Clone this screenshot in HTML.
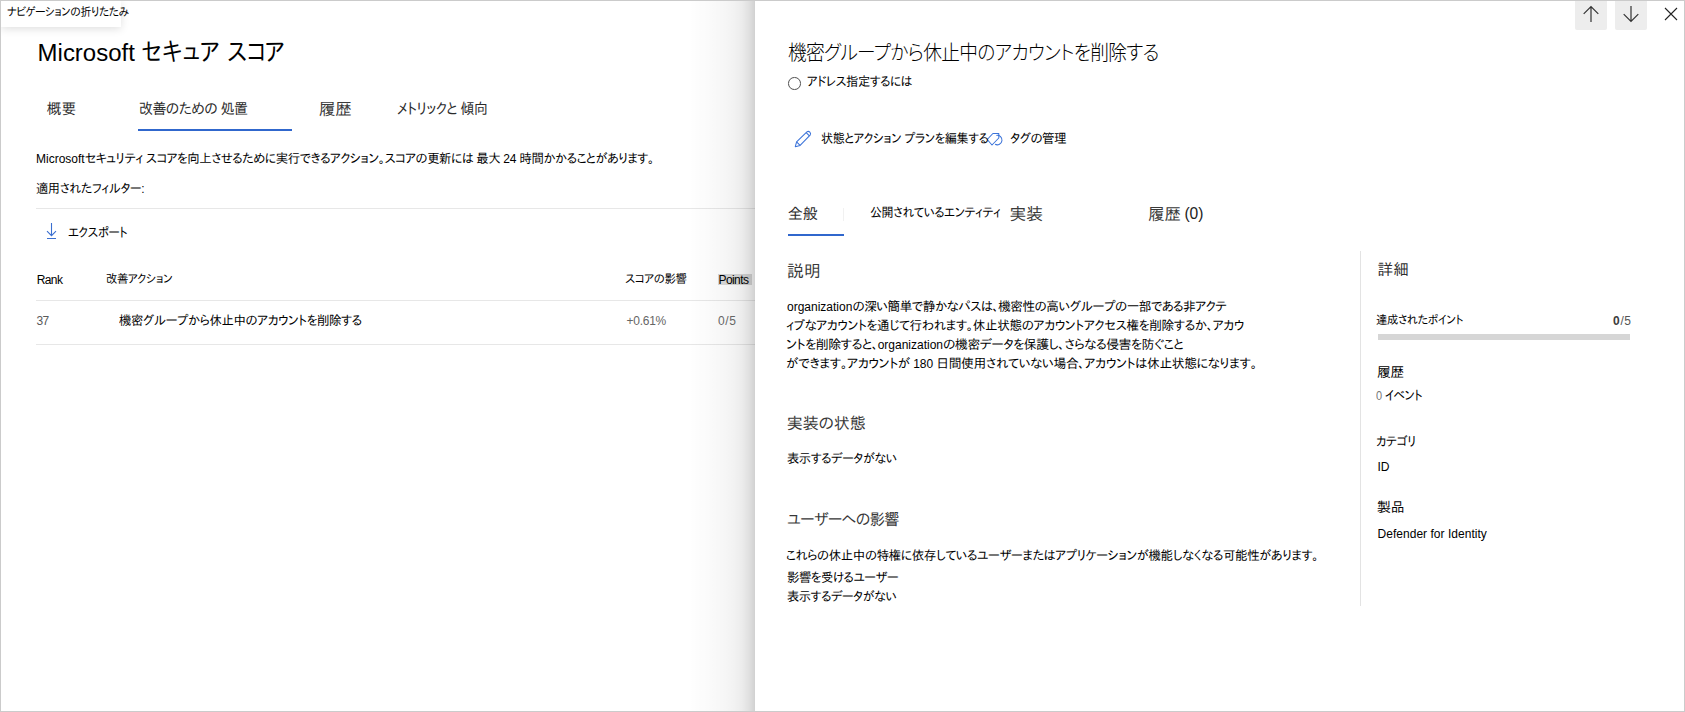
<!DOCTYPE html>
<html lang="ja"><head><meta charset="utf-8"><title>Microsoft セキュア スコア</title>
<style>
html,body{margin:0;padding:0}
body{width:1685px;height:712px;position:relative;overflow:hidden;background:#fff;font-family:"Liberation Sans","IPAPGothic","Noto Sans CJK JP","IPAGothic",sans-serif;font-feature-settings:"palt"}
.t{position:absolute;white-space:nowrap;line-height:1}
.l{letter-spacing:0}
.n{font-family:"Liberation Sans","Noto Sans CJK JP",sans-serif;font-weight:300;font-feature-settings:"palt"}
.abs{position:absolute}
.hl{position:absolute;height:1px;background:#e7e7e7}
svg{position:absolute;overflow:visible}
</style></head><body>
<!-- left page -->
<div class="hl" style="left:36px;top:208px;width:720px"></div>
<div class="hl" style="left:36px;top:300px;width:720px"></div>
<div class="hl" style="left:36px;top:344px;width:720px"></div>
<div class="abs" style="left:138px;top:129px;width:154px;height:2px;background:#3067cd"></div>
<div class="abs" style="left:718px;top:274px;width:34px;height:11px;background:#d9d9d9"></div>
<svg style="left:46px;top:222px" width="12" height="18" viewBox="0 0 12 18"><path d="M5.5 1V13.6M1 9.2L5.5 13.7L10 9.2M1 16.5H10" fill="none" stroke="#3b6fd0" stroke-width="1.1"/></svg>
<!-- tooltip -->
<div class="abs" style="left:1px;top:1px;width:120px;height:26px;background:#fff;box-shadow:0 2px 8px rgba(0,0,0,.13)"></div>
<!-- shadow of panel -->
<div class="abs" style="left:685px;top:1px;width:70px;height:710px;background:linear-gradient(to right,rgba(0,0,0,0) 4px,rgba(0,0,0,.006) 12px,rgba(0,0,0,.016) 22px,rgba(0,0,0,.035) 40px,rgba(0,0,0,.05) 49px,rgba(0,0,0,.075) 57px,rgba(0,0,0,.12) 64px,rgba(0,0,0,.18) 70px)"></div>
<div class="t" style="left:7.2px;top:6.1px;font-size:12px;letter-spacing:-0.43px;color:#000;transform:scaleX(0.906);transform-origin:0 0;">ナビゲーションの折りたたみ</div>
<div class="t" style="left:37.6px;top:41.4px;font-size:23.98px;letter-spacing:0.00px;color:#000;">Microsoft</div>
<div class="t" style="left:140.9px;top:39.1px;font-size:26px;letter-spacing:0.45px;color:#000;transform:scaleX(0.860);transform-origin:0 0;">セキュア</div>
<div class="t" style="left:227.4px;top:38.6px;font-size:26px;letter-spacing:-0.44px;color:#000;transform:scaleX(0.860);transform-origin:0 0;">スコア</div>
<div class="t" style="left:46.8px;top:102.1px;font-size:14.72px;letter-spacing:0.00px;color:#2b2b2b;">概要</div>
<div class="t" style="left:139.0px;top:101.1px;font-size:15px;letter-spacing:-0.56px;color:#2b2b2b;transform:scaleX(0.928);transform-origin:0 0;">改善のための 処置</div>
<div class="t" style="left:318.7px;top:102.1px;font-size:16.63px;letter-spacing:0.00px;color:#3a3a3a;">履歴</div>
<div class="t" style="left:397.0px;top:100.9px;font-size:15px;letter-spacing:-0.46px;color:#2b2b2b;transform:scaleX(0.921);transform-origin:0 0;">メトリックと 傾向</div>
<div class="t" style="left:35.6px;top:151.8px;font-size:13px;letter-spacing:-0.49px;color:#000;transform:scaleX(0.956);transform-origin:0 0;"><span class="l" style="font-size:12.55px">Microsoft</span>セキュリティ スコアを向上させるために実行できるアクション。スコアの更新には 最大 <span class="l" style="font-size:12.55px">24</span> 時間かかることがあります。</div>
<div class="t" style="left:35.6px;top:182.0px;font-size:13px;letter-spacing:-0.42px;color:#000;transform:scaleX(0.939);transform-origin:0 0;">適用されたフィルター<span class="l" style="font-size:12.78px">:</span></div>
<div class="t" style="left:68.1px;top:225.5px;font-size:13px;letter-spacing:-0.49px;color:#000;transform:scaleX(0.917);transform-origin:0 0;">エクスポート</div>
<div class="t" style="left:36.7px;top:274.2px;font-size:12px;letter-spacing:-0.60px;color:#000;">Rank</div>
<div class="t" style="left:106.2px;top:273.2px;font-size:12px;letter-spacing:-0.45px;color:#000;transform:scaleX(0.948);transform-origin:0 0;">改善アクション</div>
<div class="t" style="left:624.9px;top:273.3px;font-size:12px;letter-spacing:-0.44px;color:#000;transform:scaleX(0.953);transform-origin:0 0;">スコアの影響</div>
<div class="t" style="left:718.6px;top:273.8px;font-size:12px;letter-spacing:-0.61px;color:#000;">Points</div>
<div class="t" style="left:36.6px;top:315.1px;font-size:12px;letter-spacing:-0.73px;color:#5a5a5a;">37</div>
<div class="t" style="left:119.0px;top:314.0px;font-size:13px;letter-spacing:-0.46px;color:#000;transform:scaleX(0.960);transform-origin:0 0;">機密グループから休止中のアカウントを削除する</div>
<div class="t" style="left:626.5px;top:315.0px;font-size:12px;letter-spacing:-0.25px;color:#666;">+0.61%</div>
<div class="t" style="left:717.9px;top:315.0px;font-size:12px;letter-spacing:0.70px;color:#666;">0/5</div>
<!-- panel -->
<div class="abs" style="left:755px;top:1px;width:929px;height:710px;background:#fff"></div>
<div class="abs" style="left:1575px;top:1px;width:32px;height:29px;background:#ededed;border-radius:0 0 2px 2px"></div>
<div class="abs" style="left:1615px;top:1px;width:32px;height:29px;background:#ededed;border-radius:0 0 2px 2px"></div>
<svg style="left:1575px;top:0" width="110" height="32" viewBox="0 0 110 32">
<path d="M16 22V6.5M8.7 13.8L16 6.5L23.3 13.8" fill="none" stroke="#333" stroke-width="1.2"/>
<path d="M56 6V21.5M48.7 14.2L56 21.5L63.3 14.2" fill="none" stroke="#333" stroke-width="1.2"/>
<path d="M90 8L102 20M102 8L90 20" fill="none" stroke="#222" stroke-width="1.1"/>
</svg>
<div class="abs" style="left:788px;top:77px;width:10.6px;height:10.6px;border:1.2px solid #505050;border-radius:50%"></div>
<svg style="left:795px;top:131px" width="16" height="16" viewBox="0 0 16 16"><g fill="none" stroke="#3b73d9" stroke-width="1.05" stroke-linejoin="round"><path d="M0.3 15.7L1.6 10.9L11.9 0.9A2.3 2.3 0 0 1 15.1 4.1L5.1 14.4Z"/><path d="M1.6 10.9L5.1 14.4M11.2 1.7L14.4 4.9"/></g></svg>
<svg style="left:986px;top:131px" width="18" height="16" viewBox="0 0 18 16"><g fill="none" stroke="#3b73d9" stroke-width="1.05" stroke-linejoin="round"><path d="M1.2 8.5L6.9 2.5H12.8V7L6 14Z"/><path d="M10.4 4.4A4.75 4.75 0 1 1 9.1 13.3"/></g></svg>
<div class="abs" style="left:788px;top:234px;width:56px;height:2px;background:#3067cd"></div>
<div class="abs" style="left:843px;top:208px;width:1px;height:13px;background:#f1f1f1"></div>
<div class="abs" style="left:1360px;top:251px;width:1px;height:355px;background:#e3e3e3"></div>
<div class="abs" style="left:1378px;top:334px;width:252px;height:6px;background:#d6d6d6"></div>
<div class="t n" style="left:788.1px;top:43.4px;font-size:20px;letter-spacing:-0.73px;color:#000;transform:scaleX(0.935);transform-origin:0 0;">機密グループから休止中のアカウントを削除する</div>
<div class="t" style="left:807.1px;top:75.0px;font-size:13px;letter-spacing:-0.47px;color:#000;transform:scaleX(0.944);transform-origin:0 0;">アドレス指定するには</div>
<div class="t" style="left:820.6px;top:132.3px;font-size:13px;letter-spacing:-0.43px;color:#000;transform:scaleX(0.931);transform-origin:0 0;">状態とアクション プランを編集する</div>
<div class="t" style="left:1010.2px;top:132.3px;font-size:13px;letter-spacing:-0.63px;color:#000;transform:scaleX(0.969);transform-origin:0 0;">タグの管理</div>
<div class="t" style="left:787.7px;top:206.0px;font-size:15.18px;letter-spacing:0.00px;color:#2b2b2b;">全般</div>
<div class="t" style="left:870.1px;top:205.7px;font-size:13px;letter-spacing:-0.46px;color:#000;transform:scaleX(0.922);transform-origin:0 0;">公開されているエンティティ</div>
<div class="t" style="left:1009.6px;top:207.3px;font-size:16.75px;letter-spacing:0.00px;color:#3a3a3a;">実装</div>
<div class="t" style="left:1147.9px;top:205.8px;font-size:16.5px;letter-spacing:0.00px;color:#3a3a3a;">履歴</div>
<div class="t" style="left:1184.4px;top:206.3px;font-size:15.58px;letter-spacing:0.00px;color:#222;">(0)</div>
<div class="t" style="left:787.1px;top:263.5px;font-size:16.81px;letter-spacing:0.00px;color:#3a3a3a;">説明</div>
<div class="t" style="left:786.8px;top:299.8px;font-size:13px;letter-spacing:-0.57px;color:#000;transform:scaleX(0.976);transform-origin:0 0;"><span class="l" style="font-size:12.3px">organization</span>の深い簡単で静かなパスは、機密性の高いグループの一部である非アクテ</div>
<div class="t" style="left:786.1px;top:319.2px;font-size:13px;letter-spacing:-0.41px;color:#000;transform:scaleX(0.972);transform-origin:0 0;">ィブなアカウントを通じて行われます。休止状態のアカウントアクセス権を削除するか、アカウ</div>
<div class="t" style="left:785.8px;top:338.1px;font-size:13px;letter-spacing:-0.51px;color:#000;transform:scaleX(0.992);transform-origin:0 0;">ントを削除すると、<span class="l" style="font-size:12.1px">organization</span>の機密データを保護し、さらなる侵害を防ぐこと</div>
<div class="t" style="left:786.1px;top:357.1px;font-size:13px;letter-spacing:-0.43px;color:#000;transform:scaleX(0.986);transform-origin:0 0;">ができます。アカウントが <span class="l" style="font-size:12.17px">180</span> 日間使用されていない場合、アカウントは休止状態になります。</div>
<div class="t" style="left:786.8px;top:415.8px;font-size:16px;letter-spacing:-0.17px;color:#383838;">実装の状態</div>
<div class="t" style="left:787.1px;top:452.0px;font-size:13px;letter-spacing:-0.49px;color:#000;transform:scaleX(0.946);transform-origin:0 0;">表示するデータがない</div>
<div class="t" style="left:786.5px;top:512.0px;font-size:16px;letter-spacing:-0.66px;color:#383838;transform:scaleX(0.946);transform-origin:0 0;">ユーザーへの影響</div>
<div class="t" style="left:785.6px;top:549.4px;font-size:13px;letter-spacing:-0.43px;color:#000;transform:scaleX(0.961);transform-origin:0 0;">これらの休止中の特権に依存しているユーザーまたはアプリケーションが機能しなくなる可能性があります。</div>
<div class="t" style="left:787.3px;top:570.9px;font-size:13px;letter-spacing:-0.49px;color:#000;transform:scaleX(0.952);transform-origin:0 0;">影響を受けるユーザー</div>
<div class="t" style="left:787.3px;top:590.2px;font-size:13px;letter-spacing:-0.49px;color:#000;transform:scaleX(0.943);transform-origin:0 0;">表示するデータがない</div>
<div class="t" style="left:1377.6px;top:262.4px;font-size:15.57px;letter-spacing:0.00px;color:#303030;">詳細</div>
<div class="t" style="left:1376.3px;top:314.1px;font-size:12px;letter-spacing:-0.43px;color:#000;transform:scaleX(0.947);transform-origin:0 0;">達成されたポイント</div>
<div class="t" style="left:1613.1px;top:315.1px;font-size:12px;letter-spacing:0.60px;color:#555;"><b style="color:#3c3c3c">0</b>/5</div>
<div class="t" style="left:1376.9px;top:365.8px;font-size:13.68px;letter-spacing:0.00px;color:#000;">履歴</div>
<div class="t" style="left:1376.4px;top:389.2px;font-size:13px;letter-spacing:-0.53px;color:#000;transform:scaleX(0.916);transform-origin:0 0;"><span class="l" style="color:#777;font-size:12px">0</span> イベント</div>
<div class="t" style="left:1375.8px;top:434.6px;font-size:13px;letter-spacing:-0.45px;color:#000;transform:scaleX(0.918);transform-origin:0 0;">カテゴリ</div>
<div class="t" style="left:1377.5px;top:460.9px;font-size:12.07px;letter-spacing:0.00px;color:#000;">ID</div>
<div class="t" style="left:1376.9px;top:500.9px;font-size:13.86px;letter-spacing:0.00px;color:#000;">製品</div>
<div class="t" style="left:1377.5px;top:528.3px;font-size:12px;letter-spacing:0.03px;color:#000;">Defender for Identity</div>
<!-- frame -->
<div class="abs" style="left:0;top:0;width:1683px;height:710px;border:1px solid #cbcbcb;pointer-events:none"></div>
</body></html>
